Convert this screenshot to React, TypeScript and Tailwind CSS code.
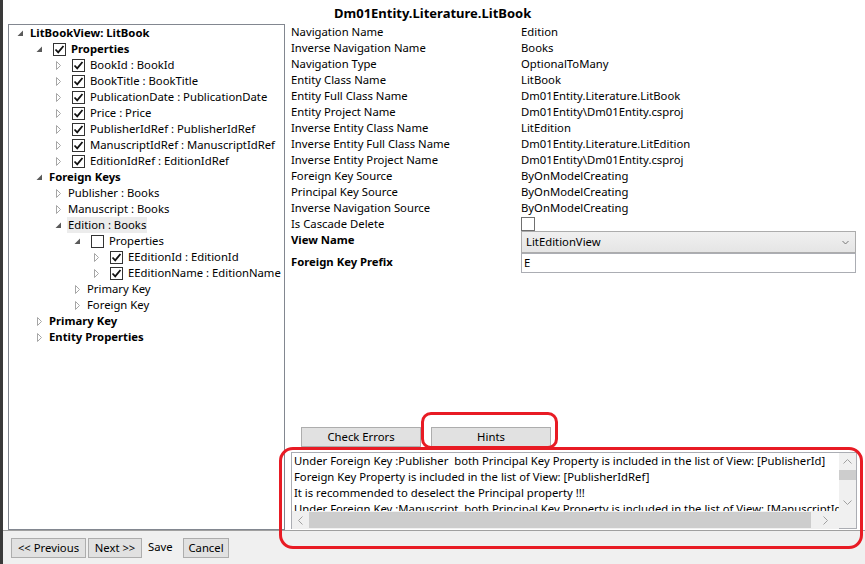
import React from "react";

type Node = {
	level: number;
	exp: "open" | "closed";
	cb?: boolean;
	text: string;
	bold?: boolean;
	sel?: boolean;
};

const tree: Node[] = [
	{ level: 0, exp: "open", text: "LitBookView: LitBook", bold: true },
	{ level: 1, exp: "open", cb: true, text: "Properties", bold: true },
	{ level: 2, exp: "closed", cb: true, text: "BookId : BookId" },
	{ level: 2, exp: "closed", cb: true, text: "BookTitle : BookTitle" },
	{ level: 2, exp: "closed", cb: true, text: "PublicationDate : PublicationDate" },
	{ level: 2, exp: "closed", cb: true, text: "Price : Price" },
	{ level: 2, exp: "closed", cb: true, text: "PublisherIdRef : PublisherIdRef" },
	{ level: 2, exp: "closed", cb: true, text: "ManuscriptIdRef : ManuscriptIdRef" },
	{ level: 2, exp: "closed", cb: true, text: "EditionIdRef : EditionIdRef" },
	{ level: 1, exp: "open", text: "Foreign Keys", bold: true },
	{ level: 2, exp: "closed", text: "Publisher : Books" },
	{ level: 2, exp: "closed", text: "Manuscript : Books" },
	{ level: 2, exp: "open", text: "Edition : Books", sel: true },
	{ level: 3, exp: "open", cb: false, text: "Properties" },
	{ level: 4, exp: "closed", cb: true, text: "EEditionId : EditionId" },
	{ level: 4, exp: "closed", cb: true, text: "EEditionName : EditionName" },
	{ level: 3, exp: "closed", text: "Primary Key" },
	{ level: 3, exp: "closed", text: "Foreign Key" },
	{ level: 1, exp: "closed", text: "Primary Key", bold: true },
	{ level: 1, exp: "closed", text: "Entity Properties", bold: true },
];

const indent = ["pl-[8px]", "pl-[27px]", "pl-[46px]", "pl-[65px]", "pl-[84px]"];

const props: [string, string][] = [
	["Navigation Name", "Edition"],
	["Inverse Navigation Name", "Books"],
	["Navigation Type", "OptionalToMany"],
	["Entity Class Name", "LitBook"],
	["Entity Full Class Name", "Dm01Entity.Literature.LitBook"],
	["Entity Project Name", "Dm01Entity\\Dm01Entity.csproj"],
	["Inverse Entity Class Name", "LitEdition"],
	["Inverse Entity Full Class Name", "Dm01Entity.Literature.LitEdition"],
	["Inverse Entity Project Name", "Dm01Entity\\Dm01Entity.csproj"],
	["Foreign Key Source", "ByOnModelCreating"],
	["Principal Key Source", "ByOnModelCreating"],
	["Inverse Navigation Source", "ByOnModelCreating"],
];

const hints = [
	"Under Foreign Key :Publisher  both Principal Key Property is included in the list of View: [PublisherId]",
	"Foreign Key Property is included in the list of View: [PublisherIdRef]",
	"It is recommended to deselect the Principal property !!!",
	"Under Foreign Key :Manuscript  both Principal Key Property is included in the list of View: [ManuscriptIdRef]",
];

const Expander = ({ open }: { open: boolean }) => (
	<span className="w-[13px] h-[16px] flex items-center shrink-0">
		{open ? (
			<svg width="7" height="7" viewBox="0 0 7 7">
				<path d="M6 0.5 L6 6 L0.5 6 Z" fill="#5a5a5a" />
			</svg>
		) : (
			<svg width="7" height="9" viewBox="0 0 7 9">
				<path d="M1.5 0.5 L5.5 4.5 L1.5 8.5 Z" fill="#fff" stroke="#a6a6a6" />
			</svg>
		)}
	</span>
);

const Check = ({ checked }: { checked: boolean }) => (
	<span className="w-[13px] h-[13px] border border-[#333] bg-white flex items-center justify-center shrink-0">
		{checked && (
			<svg width="11" height="11" viewBox="0 0 11 11">
				<path d="M1.5 5.5 L4.2 8.3 L9.5 2" fill="none" stroke="#111" strokeWidth="1.8" />
			</svg>
		)}
	</span>
);

const WinButton = ({ label, className }: { label: string; className: string }) => (
	<button
		type="button"
		className={`h-[20px] bg-[#e1e1e1] border border-[#adadad] text-[11.3px] leading-[18px] text-black ${className}`}>
		{label}
	</button>
);

const App = () => {
	return (
		<div className="w-[865px] h-[564px] flex bg-[#f0f0f0] font-['Segoe_UI','Noto_Sans',sans-serif] text-[11.3px] text-black overflow-hidden">
			<div className="w-[3px] h-full bg-[#3a3a3a] shrink-0" />
			<div className="flex flex-col flex-1">
				<div className="flex h-[530px] bg-white">
					{/* tree */}
					<div className="pl-[5px] pt-[24px] w-[282px] shrink-0">
						<div className="h-[506px] w-[277px] border border-[#828790] bg-white">
							{tree.map((n, i) => (
								<div key={i} className={`flex items-center h-[16px] ${indent[n.level]}`}>
									<Expander open={n.exp === "open"} />
									{n.cb !== undefined && (
										<span className="flex items-center ml-[4px] mr-[5px]">
											<Check checked={n.cb} />
										</span>
									)}
									<span
										className={`leading-[16px] whitespace-nowrap ${n.bold ? "font-bold" : ""} ${
											n.sel ? "bg-[#ececec] px-[1px] -ml-[1px]" : ""
										}`}>
										{n.text}
									</span>
								</div>
							))}
						</div>
					</div>

					{/* right panel */}
					<div className="relative flex-1 flex flex-col pl-[6px]">
						<div className="h-[24px] pl-[43px] pt-[4px] text-[13px] font-bold leading-[18px]">
							Dm01Entity.Literature.LitBook
						</div>
						<div className="flex flex-col">
							{props.map(([k, v]) => (
								<div key={k} className="flex h-[16px] leading-[16px]">
									<span className="w-[230px] shrink-0">{k}</span>
									<span>{v}</span>
								</div>
							))}
							<div className="flex h-[15px] leading-[16px]">
								<span className="w-[230px] shrink-0">Is Cascade Delete</span>
								<span className="w-[14px] h-[14px] border border-[#707070] bg-white mt-[1px]" />
							</div>
							<div className="flex h-[22px]">
								<span className="w-[230px] shrink-0 font-bold pt-[1px] leading-[16px]">View Name</span>
								<div className="w-[335px] h-[22px] border border-[#acacac] bg-gradient-to-b from-[#f0f0f0] to-[#e5e5e5] flex items-center justify-between pl-[4px] pr-[6px]">
									<span>LitEditionView</span>
									<svg width="7" height="5" viewBox="0 0 7 5">
										<path d="M0.5 1 L3.5 4 L6.5 1" fill="none" stroke="#777" />
									</svg>
								</div>
							</div>
							<div className="flex h-[20px]">
								<span className="w-[230px] shrink-0 font-bold pt-[1px] leading-[16px]">Foreign Key Prefix</span>
								<div className="w-[335px] h-[20px] border border-[#abadb3] bg-white pl-[2px] leading-[18px]">E</div>
							</div>
						</div>

						<div className="flex gap-[10px] pl-[10px] mt-[154px]">
							<WinButton label="Check Errors" className="w-[120px]" />
							<WinButton label="Hints" className="w-[120px]" />
						</div>

						<div className="mt-[5px] w-[566px] h-[77px] border border-[#abadb3] bg-white flex">
							<div className="flex-1 flex flex-col overflow-hidden">
								<div className="flex-1 overflow-hidden pl-[2px]">
									{hints.map((h) => (
										<div key={h} className="whitespace-pre leading-[16px] h-[16px]">
											{h}
										</div>
									))}
								</div>
							</div>
							<div className="w-[17px] h-full flex flex-col bg-[#f0f0f0]">
								<div className="h-[17px] flex items-center justify-center">
									<svg width="9" height="5" viewBox="0 0 9 5">
										<path d="M0.5 4.5 L4.5 0.5 L8.5 4.5" fill="none" stroke="#a0a0a0" />
									</svg>
								</div>
								<div className="h-[10px] bg-[#cdcdcd]" />
								<div className="flex-1" />
								<div className="h-[17px] flex items-center justify-center">
									<svg width="9" height="5" viewBox="0 0 9 5">
										<path d="M0.5 0.5 L4.5 4.5 L8.5 0.5" fill="none" stroke="#a0a0a0" />
									</svg>
								</div>
								<div className="h-[17px]" />
							</div>
						</div>

						{/* horizontal scrollbar overlaying the bottom of the hint box */}
						<div className="absolute left-[7px] top-[511px] w-[547px] h-[18px] bg-[#f0f0f0] flex items-center">
							<div className="w-[17px] flex justify-center">
								<svg width="5" height="9" viewBox="0 0 5 9">
									<path d="M4.5 0.5 L0.5 4.5 L4.5 8.5" fill="none" stroke="#a0a0a0" />
								</svg>
							</div>
							<div className="w-[502px] h-[16px] bg-[#cdcdcd]" />
							<div className="flex-1 flex justify-center">
								<svg width="5" height="9" viewBox="0 0 5 9">
									<path d="M0.5 0.5 L4.5 4.5 L0.5 8.5" fill="none" stroke="#a0a0a0" />
								</svg>
							</div>
						</div>

						{/* red annotation outline around Hints */}
						<div className="absolute left-[136px] top-[412px] w-[137px] h-[37px] border-[3px] border-[#e81b24] rounded-[10px]" />
					</div>
				</div>

				<div className="relative flex-1 flex items-center pl-[8px] border-t border-[#a0a0a0]">
					<WinButton label="<< Previous" className="w-[75px]" />
					<WinButton label="Next >>" className="w-[54px] ml-[2px]" />
					<span className="ml-[6px] w-[24px]">Save</span>
					<WinButton label="Cancel" className="w-[46px] ml-[11px]" />
				</div>
			</div>
			<div className="absolute left-[279px] top-[447px] w-[584px] h-[102px] border-[3px] border-[#e81b24] rounded-[14px] pointer-events-none" />
		</div>
	);
};

export default App;
